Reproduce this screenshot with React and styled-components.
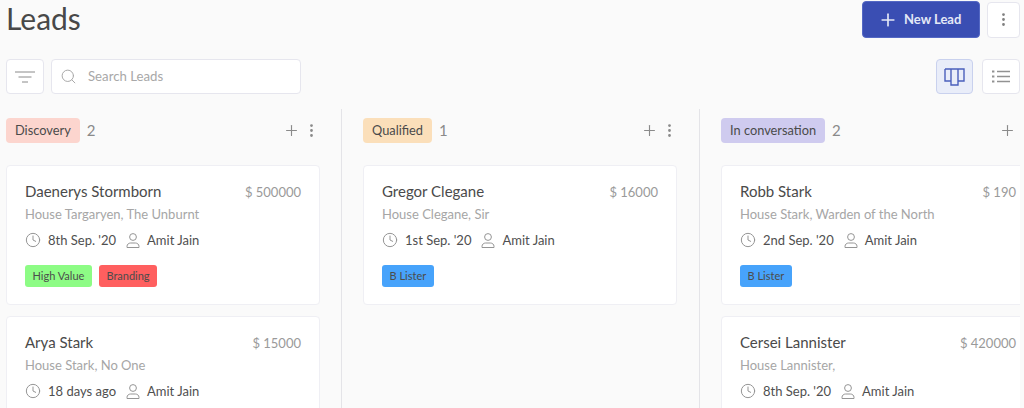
import styled, { createGlobalStyle } from "styled-components";
import { Plus, EllipsisVertical, Search, Clock } from "lucide-react";

const GlobalStyle = createGlobalStyle`
  html, body {
    margin: 0;
    height: 100%;
    overflow: hidden;
    background: #fafafa;
    font-family: "Lato", "Noto Sans", sans-serif;
  }
`;

const Page = styled.div`
  width: 1024px;
  height: 408px;
  overflow: hidden;
  box-sizing: border-box;
  padding: 1px 4px 0 6px;
`;
const Header = styled.div`
  display: flex;
  justify-content: space-between;
  align-items: flex-start;
  height: 37px;
`;
const Title = styled.h1`
  margin: -1px 0 0;
  font-size: 30px;
  font-weight: 400;
  color: #484848;
  line-height: 36px;
`;
const HeaderActions = styled.div`
  display: flex;
  align-items: center;
  gap: 7px;
`;
const NewLeadButton = styled.button`
  display: flex;
  align-items: center;
  gap: 6px;
  width: 118px;
  height: 37px;
  padding: 0 0 0 15px;
  border: 1px solid #5468c4;
  border-radius: 4px;
  background: #3a4eb3;
  color: #e4e8f6;
  font: 700 13px "Lato", sans-serif;
`;
const RaisedText = styled.span`
  padding-bottom: 2px;
`;
const IconButton = styled.button`
  display: flex;
  align-items: center;
  justify-content: center;
  box-sizing: border-box;
  width: ${(props) => props.$width}px;
  height: ${(props) => props.$height}px;
  padding: 0;
  border: 1px solid ${(props) => (props.$active ? "#c9d1ee" : "#e6e6ee")};
  border-radius: 4px;
  background: ${(props) => (props.$active ? "#e9edf9" : "#fff")};
  color: #808080;
`;
const Toolbar = styled.div`
  display: flex;
  align-items: center;
  gap: 7px;
  margin-top: 21px;
  height: 35px;
`;
const SearchBox = styled.label`
  display: flex;
  align-items: center;
  gap: 11px;
  box-sizing: border-box;
  width: 250px;
  height: 35px;
  padding-left: 8px;
  background: #fff;
  border: 1px solid #e6e6ee;
  border-radius: 4px;
  color: #a8a8a8;
  font-size: 13.2px;
`;
const ViewButtons = styled.div`
  display: flex;
  gap: 9px;
  margin-left: auto;
`;
const Board = styled.div`
  display: flex;
  margin-top: 15px;
  overflow: hidden;
`;
const Column = styled.section`
  box-sizing: border-box;
  flex: 0 0 ${(props) => (props.$first ? 335 : 358)}px;
  height: 300px;
  padding: 9px 21px 0 ${(props) => (props.$first ? 0 : 21)}px;
  border-left: ${(props) => (props.$first ? "none" : "1px solid #e4e4e8")};
`;
const ColumnHeader = styled.div`
  display: flex;
  align-items: center;
  height: 25px;
  margin-bottom: 22px;
`;
const StageTag = styled.span`
  display: inline-flex;
  align-items: center;
  box-sizing: border-box;
  height: 25px;
  padding: 0 9px 2px;
  border-radius: 4px;
  background: ${(props) => props.$color};
  color: #4a4a4a;
  font-size: 12.8px;
`;
const Count = styled.span`
  margin-left: 7px;
  padding-bottom: 2px;
  color: #8a8a8a;
  font-size: 15px;
`;
const ColumnActions = styled.div`
  display: flex;
  align-items: center;
  gap: 3px;
  margin-left: auto;
  color: #8a8a8a;
`;
const CardList = styled.div`
  display: flex;
  flex-direction: column;
  gap: 11px;
`;
const Card = styled.article`
  box-sizing: border-box;
  width: 314px;
  height: 140px;
  padding: 16px 18px 0;
  background: #fff;
  border: 1px solid #efeff4;
  border-radius: 4px;
`;
const CardTop = styled.div`
  display: flex;
  justify-content: space-between;
  align-items: center;
  height: 18px;
`;
const Name = styled.span`
  color: #4a4a4a;
  font-size: 15px;
`;
const Price = styled.span`
  padding-top: 1px;
  color: #9a9a9a;
  font-size: 13px;
`;
const Company = styled.div`
  margin-top: 6px;
  height: 16px;
  line-height: 16px;
  color: #a6a6a6;
  font-size: 13px;
`;
const Meta = styled.div`
  display: flex;
  align-items: center;
  margin-top: 9px;
  height: 18px;
  color: #4f4f4f;
  font-size: 13px;
`;
const MetaItem = styled.span`
  display: flex;
  align-items: center;
  gap: 7px;
  margin-right: 10px;
  svg {
    color: #959595;
  }
`;
const Labels = styled.div`
  display: flex;
  gap: 7px;
  margin-top: 16px;
`;
const Label = styled.span`
  display: inline-flex;
  align-items: center;
  box-sizing: border-box;
  height: 22px;
  padding: 0 7.5px 2px;
  border-radius: 3px;
  background: ${(props) => props.$color};
  color: #4c4c4c;
  font-size: 11px;
`;

const labelColors = {
  "High Value": "#8dfc85",
  Branding: "#ff5f5f",
  "B Lister": "#47a3fb",
};

const columns = [
  {
    title: "Discovery",
    color: "#fcd5ce",
    leads: [
      { name: "Daenerys Stormborn", price: "$ 500000", company: "House Targaryen, The Unburnt", date: "8th Sep. '20", labels: ["High Value", "Branding"] },
      { name: "Arya Stark", price: "$ 15000", company: "House Stark, No One", date: "18 days ago", labels: [] },
    ],
  },
  {
    title: "Qualified",
    color: "#fbdfba",
    leads: [
      { name: "Gregor Clegane", price: "$ 16000", company: "House Clegane, Sir", date: "1st Sep. '20", labels: ["B Lister"] },
    ],
  },
  {
    title: "In conversation",
    color: "#cfcbef",
    leads: [
      { name: "Robb Stark", price: "$ 190", company: "House Stark, Warden of the North", date: "2nd Sep. '20", labels: ["B Lister"] },
      { name: "Cersei Lannister", price: "$ 420000", company: "House Lannister,", date: "8th Sep. '20", labels: [] },
    ],
  },
];

function FilterIcon() {
  return (
    <svg width="20" height="12" viewBox="0 0 20 12" fill="none" stroke="#8a8a8a" strokeWidth="1">
      <path d="M0 1h20M3.5 6h13M7 11h6" />
    </svg>
  );
}

function BoardIcon() {
  return (
    <svg width="21" height="18" viewBox="0 0 21 18" fill="none" stroke="#4a5fbc" strokeWidth="1.4">
      <path d="M1 1h19v12h-6M7 13H1V1M7 1v16h7V1" />
    </svg>
  );
}

function ListIcon() {
  return (
    <svg width="18" height="13" viewBox="0 0 18 13" fill="none" stroke="#929292" strokeWidth="1.3">
      <path d="M5 1.5h13M5 6.5h13M5 11.5h13" />
      <path d="M0 1.5h2.4M0 6.5h2.4M0 11.5h2.4" strokeWidth="2" />
    </svg>
  );
}

function PersonIcon() {
  return (
    <svg width="14" height="15" viewBox="0 0 14 15" fill="none" stroke="currentColor" strokeWidth="1">
      <circle cx="7" cy="4" r="3.4" />
      <path d="M1 14.5h12v-1.2c0-2-1.8-3.3-3.6-3.3H4.6C2.8 10 1 11.3 1 13.3z" />
    </svg>
  );
}

function LeadCard({ lead }) {
  return (
    <Card>
      <CardTop>
        <Name>{lead.name}</Name>
        <Price>{lead.price}</Price>
      </CardTop>
      <Company>{lead.company}</Company>
      <Meta>
        <MetaItem>
          <Clock size={16} strokeWidth={1.5} />
          {lead.date}
        </MetaItem>
        <MetaItem>
          <PersonIcon />
          Amit Jain
        </MetaItem>
      </Meta>
      <Labels>
        {lead.labels.map((label) => (
          <Label key={label} $color={labelColors[label]}>
            {label}
          </Label>
        ))}
      </Labels>
    </Card>
  );
}

export default function App() {
  return (
    <Page>
      <GlobalStyle />
      <Header>
        <Title>Leads</Title>
        <HeaderActions>
          <NewLeadButton>
            <Plus size={20} strokeWidth={2} />
            <RaisedText>New Lead</RaisedText>
          </NewLeadButton>
          <IconButton $width={33} $height={36}>
            <EllipsisVertical size={17} />
          </IconButton>
        </HeaderActions>
      </Header>
      <Toolbar>
        <IconButton $width={38} $height={35}>
          <FilterIcon />
        </IconButton>
        <SearchBox>
          <Search size={17} strokeWidth={1.4} />
          <RaisedText>Search Leads</RaisedText>
        </SearchBox>
        <ViewButtons>
          <IconButton $width={37} $height={35} $active>
            <BoardIcon />
          </IconButton>
          <IconButton $width={38} $height={35}>
            <ListIcon />
          </IconButton>
        </ViewButtons>
      </Toolbar>
      <Board>
        {columns.map((column, index) => (
          <Column key={column.title} $first={index === 0}>
            <ColumnHeader>
              <StageTag $color={column.color}>{column.title}</StageTag>
              <Count>{column.leads.length}</Count>
              <ColumnActions>
                <Plus size={17} strokeWidth={1.6} />
                <EllipsisVertical size={17} />
              </ColumnActions>
            </ColumnHeader>
            <CardList>
              {column.leads.map((lead) => (
                <LeadCard key={lead.name} lead={lead} />
              ))}
            </CardList>
          </Column>
        ))}
      </Board>
    </Page>
  );
}
